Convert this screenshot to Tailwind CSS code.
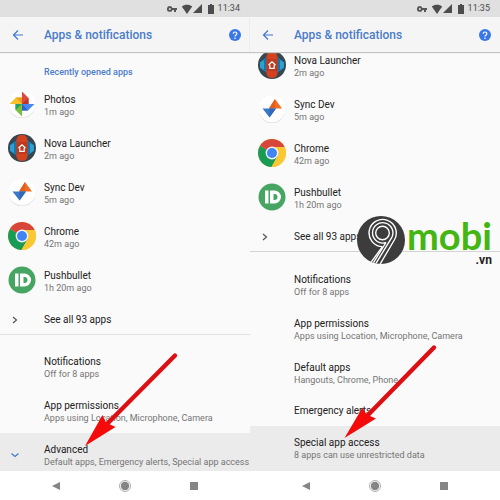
<!DOCTYPE html>
<html lang="en">
<head>
    <meta charset="UTF-8">
    <meta name="viewport" content="width=device-width, initial-scale=1.0">
    <title>Apps &amp; notifications</title>
    <script src="https://cdn.jsdelivr.net/npm/@tailwindcss/browser@4"></script>
</head>
<body class="bg-[#fafafa] font-[Roboto,sans-serif] text-[#212121]">
    <!-- Shared icons -->
    <svg class="hidden" aria-hidden="true">
        <symbol id="key" viewBox="0 0 10 8">
            <path fill="#555" fill-rule="evenodd" d="M2.8 1a2.9 2.9 0 0 1 2.7 2H10v2H9v2H7V5H5.5A2.9 2.9 0 1 1 2.8 1zm0 2a1 1 0 1 0 0 2 1 1 0 0 0 0-2z"/>
        </symbol>
        <symbol id="wifi" viewBox="0 0 12 10">
            <path fill="#4c4c4c" d="M6 10L.8 2.500C3.500.2 8.500.2 11.200 2.500z"/>
        </symbol>
        <symbol id="signal" viewBox="0 0 9 9">
            <path fill="#4c4c4c" d="M9 0v9H0z"/>
        </symbol>
        <symbol id="battery" viewBox="0 0 6 10">
            <path fill="#4c4c4c" d="M2 0h2v1h2v9H0V1h2z"/>
        </symbol>
        <symbol id="back" viewBox="0 0 12 12">
            <path d="M11 6H2M6 1.500L1.500 6 6 10.500" fill="none" stroke="#3f78cf" stroke-width="1.200"/>
        </symbol>
        <symbol id="help" viewBox="0 0 12 12">
            <circle cx="6" cy="6" r="6" fill="#3b78e7"/>
            <path d="M4.200 4.800c0-2.400 3.700-2.400 3.700 0C7.900 6 6 6 6 7.600" fill="none" stroke="#fff" stroke-width="1.200"/>
            <circle cx="6" cy="9.200" r=".8" fill="#fff"/>
        </symbol>
        <symbol id="photos" viewBox="0 0 28 28">
            <circle cx="14" cy="14.800" r="13.200" fill="#d4d4d4"/>
            <circle cx="14" cy="14" r="13.400" fill="#fff"/>
            <path fill="#e0483b" d="M14 1.500l6.500 6.500v6H14z"/>
            <path fill="#b3372d" d="M14 14l6.500-6v6z"/>
            <path fill="#4a86f0" d="M26.500 14L20 20.500h-6V14z"/>
            <path fill="#2f62c4" d="M14 14l6 6.500h-6z"/>
            <path fill="#7bbf3f" d="M14 26.500L7.500 20v-6H14z"/>
            <path fill="#25a35e" d="M14 14l-6.500 6v-6z"/>
            <path fill="#fbc02d" d="M1.500 14L8 7.500h6V14z"/>
            <path fill="#e8a020" d="M14 14L8 7.500h6z"/>
        </symbol>
        <symbol id="nova" viewBox="0 0 28 28">
            <circle cx="14" cy="14" r="14" fill="#37474f"/>
            <path fill="#1976a8" d="M9 6v16l-3-2-4-3v-6l4-3zM19 6v16l3-2 4-3v-6l-4-3z"/>
            <path fill="#2e9fd0" d="M6 9v10l-4-2.500v-5zM22 9v10l4-2.500v-5z"/>
            <rect x="8.500" y="1" width="11" height="26" rx="5" fill="#d5401f"/>
            <path fill="#bd3a1e" d="M8.500 8h11v12h-11z"/>
            <path d="M10.500 14L14 10.800l3.500 3.200M11.800 13.800v3.500h4.400v-3.500" fill="none" stroke="#fff" stroke-width="1.200"/>
        </symbol>
        <symbol id="sync" viewBox="0 0 28 28">
            <circle cx="14" cy="14.800" r="13.200" fill="#d4d4d4"/>
            <circle cx="14" cy="14" r="13.400" fill="#fff"/>
            <path fill="#ef6c22" d="M17 4l7 9.500H11z"/>
            <path fill="#e05f1b" d="M17 4v9.500h-6z"/>
            <path fill="#3b78c9" d="M4.500 13.500H18L11.500 22.500z"/>
            <path fill="#3169b8" d="M11.500 13.500H18l-6.500 9z"/>
        </symbol>
        <symbol id="chrome" viewBox="0 0 28 28">
            <circle cx="14" cy="14" r="14" fill="#fbc733"/>
            <path fill="#189b55" d="M14 14L2 6.800A14 14 0 0 0 13.500 28l6-10.800z"/>
            <path fill="#d8453a" d="M14 14L2 6.800A14 14 0 0 1 26.600 8H14z"/>
            <path fill="#fbc733" d="M14 8h12.600A14 14 0 0 1 13.500 28l6-10.800z"/>
            <circle cx="14" cy="14" r="6.400" fill="#f5f5f5"/>
            <circle cx="14" cy="14" r="5" fill="#4184f3"/>
        </symbol>
        <symbol id="pushbullet" viewBox="0 0 28 28">
            <circle cx="14" cy="14" r="13.500" fill="#47a563"/>
            <path fill="#fff" d="M7 7.500h3.500v13H7z"/>
            <path fill="#fff" fill-rule="evenodd" d="M12 7.500h4.500a6.500 6.500 0 0 1 0 13H12zm3.500 3.500v6h1a3 3 0 0 0 0-6z"/>
        </symbol>
        <symbol id="chevron" viewBox="0 0 6 10">
            <path d="M1 2l3.500 3L1 8" fill="none" stroke="#555" stroke-width="1.200"/>
        </symbol>
        <symbol id="nav-back" viewBox="0 0 8 8"><path fill="#858585" d="M8 0v8L0 4z"/></symbol>
        <symbol id="nav-home" viewBox="0 0 12 12">
            <circle cx="6" cy="6" r="5.500" fill="none" stroke="#9a9a9a" stroke-width=".8"/>
            <circle cx="6" cy="6" r="4.200" fill="#858585"/>
        </symbol>
        <symbol id="nav-recent" viewBox="0 0 8 8"><path fill="#858585" d="M0 0h8v8H0z"/></symbol>
    </svg>

    <main class="relative flex min-h-screen">
        <!-- First screen -->
        <section class="relative flex min-w-0 flex-1 flex-col">
            <div class="flex h-[17px] items-center justify-end bg-[#e0e0e0] pr-[10px] text-[9px] text-[#4c4c4c]">
                <svg class="mr-1 h-2 w-[10px]"><use href="#key"/></svg>
                <svg class="h-[10px] w-3"><use href="#wifi"/></svg>
                <svg class="mr-[6px] h-[9px] w-[9px]"><use href="#signal"/></svg>
                <svg class="mr-1 h-[10px] w-[6px]"><use href="#battery"/></svg>
                <span>11:34</span>
            </div>
            <header class="z-10 flex h-[35px] items-center bg-[#f5f5f5] pr-[9px] pl-3 shadow-[0_1px_1px_#c4c4c4]">
                <button aria-label="Back"><svg class="h-3 w-3"><use href="#back"/></svg></button>
                <h1 class="ml-5 flex-1 text-[12px] font-medium text-[#4a7cc9]">Apps &amp; notifications</h1>
                <button aria-label="Help"><svg class="h-3 w-3"><use href="#help"/></svg></button>
            </header>
            <h2 class="flex h-[31px] items-center pt-[10px] pl-11 text-[9px] font-medium text-[#4a7cc9]">Recently opened apps</h2>
            <ul>
                <li><a href="#" class="flex h-11 items-center gap-2 pl-2"><svg class="mb-[2px] h-7 w-7"><use href="#photos"/></svg><span class="flex flex-col"><span class="text-[10px] leading-[13px]">Photos</span><span class="text-[9px] leading-[12px] text-[#757575]">1m ago</span></span></a></li>
                <li><a href="#" class="flex h-11 items-center gap-2 pl-2"><svg class="mb-[2px] h-7 w-7"><use href="#nova"/></svg><span class="flex flex-col"><span class="text-[10px] leading-[13px]">Nova Launcher</span><span class="text-[9px] leading-[12px] text-[#757575]">2m ago</span></span></a></li>
                <li><a href="#" class="flex h-11 items-center gap-2 pl-2"><svg class="mb-[2px] h-7 w-7"><use href="#sync"/></svg><span class="flex flex-col"><span class="text-[10px] leading-[13px]">Sync Dev</span><span class="text-[9px] leading-[12px] text-[#757575]">5m ago</span></span></a></li>
                <li><a href="#" class="flex h-11 items-center gap-2 pl-2"><svg class="mb-[2px] h-7 w-7"><use href="#chrome"/></svg><span class="flex flex-col"><span class="text-[10px] leading-[13px]">Chrome</span><span class="text-[9px] leading-[12px] text-[#757575]">42m ago</span></span></a></li>
                <li><a href="#" class="flex h-11 items-center gap-2 pl-2"><svg class="mb-[2px] h-7 w-7"><use href="#pushbullet"/></svg><span class="flex flex-col"><span class="text-[10px] leading-[13px]">Pushbullet</span><span class="text-[9px] leading-[12px] text-[#757575]">1h 20m ago</span></span></a></li>
            </ul>
            <a href="#" class="flex h-8 items-center border-b border-[#e2e2e2] pt-[2px] pl-3 text-[10px]"><svg class="mr-[26px] h-[10px] w-[6px]"><use href="#chevron"/></svg>See all 93 apps</a>
            <div class="pt-[10px]">
                <a href="#" class="flex h-11 flex-col justify-center pl-11"><span class="text-[10px] leading-[13px]">Notifications</span><span class="text-[9px] leading-[12px] text-[#757575]">Off for 8 apps</span></a>
                <a href="#" class="flex h-11 flex-col justify-center pl-11"><span class="text-[10px] leading-[13px]">App permissions</span><span class="text-[9px] leading-[12px] text-[#757575]">Apps using Location, Microphone, Camera</span></a>
            </div>
            <button class="flex flex-1 items-center bg-[#ebebeb] pt-[6px] pl-[10px] text-left">
                <svg class="mr-6 h-[10px] w-[10px]" viewBox="0 0 10 10"><path d="M1.500 3.500L5 6.500l3.500-3" fill="none" stroke="#3f78cf" stroke-width="1.200"/></svg>
                <span class="flex flex-col"><span class="text-[10px] leading-[13px]">Advanced</span><span class="text-[9px] leading-[12px] whitespace-nowrap text-[#757575]">Default apps, Emergency alerts, Special app access</span></span>
            </button>
            <nav class="flex h-[29px] items-center justify-between bg-white px-[52px]">
                <button aria-label="Back"><svg class="h-2 w-2"><use href="#nav-back"/></svg></button>
                <button aria-label="Home"><svg class="h-3 w-3"><use href="#nav-home"/></svg></button>
                <button aria-label="Recents"><svg class="h-2 w-2"><use href="#nav-recent"/></svg></button>
            </nav>
            <!-- Arrow to Advanced -->
            <svg class="pointer-events-none absolute top-[350px] left-[80px] z-20 h-[100px] w-[100px]" viewBox="0 0 100 100">
                <path d="M95 5.500L27 74" stroke="#dd0f12" stroke-width="4.400" stroke-linecap="round"/>
                <path fill="#f40a0a" d="M5 96l17.500-31 3.500 7.500 9.500 4.500z"/>
            </svg>
        </section>

        <!-- Second screen -->
        <section class="relative flex min-w-0 flex-1 flex-col">
            <div class="flex h-[17px] items-center justify-end bg-[#e0e0e0] pr-[10px] text-[9px] text-[#4c4c4c]">
                <svg class="mr-1 h-2 w-[10px]"><use href="#key"/></svg>
                <svg class="h-[10px] w-3"><use href="#wifi"/></svg>
                <svg class="mr-[6px] h-[9px] w-[9px]"><use href="#signal"/></svg>
                <svg class="mr-1 h-[10px] w-[6px]"><use href="#battery"/></svg>
                <span>11:35</span>
            </div>
            <header class="z-10 flex h-[35px] items-center bg-[#f5f5f5] pr-[9px] pl-3 shadow-[0_1px_1px_#c4c4c4]">
                <button aria-label="Back"><svg class="h-3 w-3"><use href="#back"/></svg></button>
                <h1 class="ml-5 flex-1 text-[12px] font-medium text-[#4a7cc9]">Apps &amp; notifications</h1>
                <button aria-label="Help"><svg class="h-3 w-3"><use href="#help"/></svg></button>
            </header>
            <ul class="-mt-2">
                <li><a href="#" class="flex h-11 items-center gap-2 pl-2"><svg class="mb-[2px] h-7 w-7"><use href="#nova"/></svg><span class="flex flex-col"><span class="text-[10px] leading-[13px]">Nova Launcher</span><span class="text-[9px] leading-[12px] text-[#757575]">2m ago</span></span></a></li>
                <li><a href="#" class="flex h-11 items-center gap-2 pl-2"><svg class="mb-[2px] h-7 w-7"><use href="#sync"/></svg><span class="flex flex-col"><span class="text-[10px] leading-[13px]">Sync Dev</span><span class="text-[9px] leading-[12px] text-[#757575]">5m ago</span></span></a></li>
                <li><a href="#" class="flex h-11 items-center gap-2 pl-2"><svg class="mb-[2px] h-7 w-7"><use href="#chrome"/></svg><span class="flex flex-col"><span class="text-[10px] leading-[13px]">Chrome</span><span class="text-[9px] leading-[12px] text-[#757575]">42m ago</span></span></a></li>
                <li><a href="#" class="flex h-11 items-center gap-2 pl-2"><svg class="mb-[2px] h-7 w-7"><use href="#pushbullet"/></svg><span class="flex flex-col"><span class="text-[10px] leading-[13px]">Pushbullet</span><span class="text-[9px] leading-[12px] text-[#757575]">1h 20m ago</span></span></a></li>
            </ul>
            <a href="#" class="flex h-8 items-center border-b border-[#d4d4d4] pt-[2px] pl-3 text-[10px]"><svg class="mr-[26px] h-[10px] w-[6px]"><use href="#chevron"/></svg>See all 93 apps</a>
            <div class="pt-[11px]">
                <a href="#" class="flex h-11 flex-col justify-center pl-11"><span class="text-[10px] leading-[13px]">Notifications</span><span class="text-[9px] leading-[12px] text-[#757575]">Off for 8 apps</span></a>
                <a href="#" class="flex h-11 flex-col justify-center pl-11"><span class="text-[10px] leading-[13px]">App permissions</span><span class="text-[9px] leading-[12px] text-[#757575]">Apps using Location, Microphone, Camera</span></a>
                <a href="#" class="flex h-11 flex-col justify-center pl-11"><span class="text-[10px] leading-[13px]">Default apps</span><span class="text-[9px] leading-[12px] text-[#757575]">Hangouts, Chrome, Phone</span></a>
                <a href="#" class="flex h-[31px] items-center pl-11 text-[10px]">Emergency alerts</a>
            </div>
            <a href="#" class="flex flex-1 flex-col justify-center bg-[#ebebeb] pl-11"><span class="text-[10px] leading-[13px]">Special app access</span><span class="text-[9px] leading-[12px] text-[#757575]">8 apps can use unrestricted data</span></a>
            <nav class="flex h-[29px] items-center justify-between bg-white px-[52px]">
                <button aria-label="Back"><svg class="h-2 w-2"><use href="#nav-back"/></svg></button>
                <button aria-label="Home"><svg class="h-3 w-3"><use href="#nav-home"/></svg></button>
                <button aria-label="Recents"><svg class="h-2 w-2"><use href="#nav-recent"/></svg></button>
            </nav>
            <!-- Arrow to Special app access -->
            <svg class="pointer-events-none absolute top-[342px] left-[90px] z-20 h-[100px] w-[100px]" viewBox="0 0 100 100">
                <path d="M94 5.500L27 74" stroke="#dd0f12" stroke-width="4.400" stroke-linecap="round"/>
                <path fill="#f40a0a" d="M4.500 96l18-30.500 4 7 9.500 4z"/>
            </svg>

            <!-- 9mobi.vn watermark -->
            <div class="pointer-events-none absolute top-[216px] left-[107px] z-20 flex items-start gap-[2px]">
                <svg class="h-12 w-12" viewBox="0 0 48 48" role="img" aria-label="9">
                    <defs><clipPath id="disc"><circle cx="24" cy="24" r="24"/></clipPath></defs>
                    <circle cx="24" cy="24" r="24" fill="#3c3c3c"/>
                    <g clip-path="url(#disc)" fill="none" stroke="#fff" stroke-width="1.400">
                        <circle cx="25.500" cy="17" r="6.800"/>
                        <path d="M29 26.500A10.200 10.200 0 1 1 34.200 22.500L18 49M29 26.500L15 49"/>
                        <path d="M25.500 30.600A13.600 13.600 0 1 1 37.300 24L22 50M25.500 30.600L12 49"/>
                    </g>
                </svg>
                <div class="flex flex-col">
                    <span class="font-[Lato,sans-serif] text-[38px] leading-[38px] font-bold text-[#43b611]">mobi</span>
                    <span class="text-right text-[12px] leading-[12px] font-bold text-[#222]">.vn</span>
                </div>
            </div>
        </section>
    </main>
</body>
</html>
